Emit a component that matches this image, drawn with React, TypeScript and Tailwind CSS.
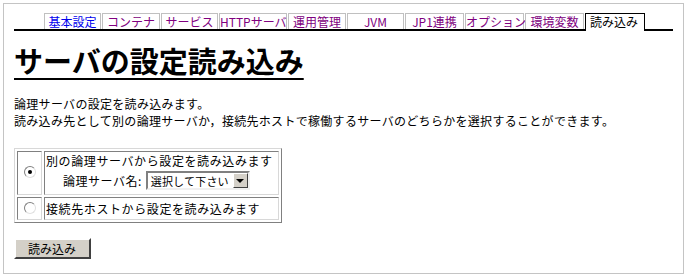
import React from "react";

const tabs = [
  { label: "基本設定", w: "w-[57px]", color: "text-[#0000ee]" },
  { label: "コンテナ", w: "w-[58px]", color: "text-[#800080]" },
  { label: "サービス", w: "w-[57px]", color: "text-[#800080]" },
  { label: "HTTPサーバ", w: "w-[68px]", color: "text-[#800080]" },
  { label: "運用管理", w: "w-[58px]", color: "text-[#800080]" },
  { label: "JVM", w: "w-[57px]", color: "text-[#800080]" },
  { label: "JP1連携", w: "w-[59px]", color: "text-[#800080]" },
  { label: "オプション", w: "w-[59px]", color: "text-[#800080]" },
  { label: "環境変数", w: "w-[59px]", color: "text-[#800080]" },
];

function Radio({ checked }: { checked?: boolean }) {
  return (
    <span className="relative inline-block w-[12px] h-[12px] rounded-full border border-t-[#808080] border-l-[#808080] border-b-[#e0e0e0] border-r-[#e0e0e0] bg-white">
      {checked && (
        <span className="absolute left-[3px] top-[3px] w-[4px] h-[4px] rounded-full bg-black" />
      )}
    </span>
  );
}

export default function App() {
  return (
    <div
      className="w-[687px] h-[277px] bg-white p-[3px] text-black"
      style={{ fontFamily: '"Noto Sans CJK JP", "Liberation Sans", sans-serif' }}
    >
      <div className="w-[681px] h-[271px] border border-[#c4c4c4] px-[10px]">
        {/* tab bar */}
        <div className="mt-[9px] flex items-end pl-[30px] border-b-2 border-black">
          {tabs.map((t) => (
            <div
              key={t.label}
              className={`${t.w} h-[16px] mr-px border border-b-0 border-[#c0c0c0] text-[12px] leading-[15px] text-center whitespace-nowrap ${t.color}`}
            >
              {t.label}
            </div>
          ))}
          <div className="w-[60px] h-[18px] -mb-[2px] border border-b-0 border-black bg-white text-[12px] leading-[16px] pl-[4px] whitespace-nowrap">
            読み込み
          </div>
        </div>

        <h1 className="mt-[12px] text-[29px] leading-[34px] font-bold underline decoration-2 underline-offset-[5px] w-fit">
          サーバの設定読み込み
        </h1>

        <div className="mt-[18px] text-[12px] leading-[17px] tracking-[0.3px]">
          <p>論理サーバの設定を読み込みます。</p>
          <p>
            読み込み先として別の論理サーバか，接続先ホストで稼働するサーバのどちらかを選択することができます。
          </p>
        </div>

        <table className="mt-[19px] w-[268px] border-separate border-spacing-[2px] border border-t-[#d8d8d8] border-l-[#d8d8d8] border-b-[#808080] border-r-[#808080] text-[12px]">
          <tbody>
            <tr>
              <td className="w-[25px] h-[44px] border border-t-[#808080] border-l-[#808080] border-b-[#d8d8d8] border-r-[#d8d8d8] text-center align-middle">
                <Radio checked />
              </td>
              <td className="border border-t-[#808080] border-l-[#808080] border-b-[#d8d8d8] border-r-[#d8d8d8] pl-[1px] align-top leading-[17px] tracking-[0.6px]">
                <div className="whitespace-nowrap">別の論理サーバから設定を読み込みます</div>
                <div className="flex items-center pl-[17px] mt-[2px] tracking-normal">
                  <span className="whitespace-nowrap tracking-[0.5px]">論理サーバ名:</span>
                  <div className="ml-[4px] w-[104px] h-[19px] flex items-center border-2 border-t-[#808080] border-l-[#808080] border-b-[#f0f0f0] border-r-[#f0f0f0] bg-white">
                    <span className="flex-1 pl-[3px] leading-[14px] whitespace-nowrap text-[11px] tracking-[0.2px]">
                      選択して下さい
                    </span>
                    <span className="w-[15px] h-[15px] flex items-center justify-center bg-[#d4d0c8] border border-t-white border-l-white border-b-[#404040] border-r-[#404040]">
                      <span className="w-0 h-0 border-l-[4px] border-r-[4px] border-t-[4px] border-l-transparent border-r-transparent border-t-black" />
                    </span>
                  </div>
                </div>
              </td>
            </tr>
            <tr>
              <td className="h-[23px] border border-t-[#808080] border-l-[#808080] border-b-[#d8d8d8] border-r-[#d8d8d8] text-center align-middle">
                <Radio />
              </td>
              <td className="border border-t-[#808080] border-l-[#808080] border-b-[#d8d8d8] border-r-[#d8d8d8] pl-[1px] align-middle leading-[17px] tracking-[0.6px] whitespace-nowrap">
                接続先ホストから設定を読み込みます
              </td>
            </tr>
          </tbody>
        </table>

        <button className="mt-[15px] w-[77px] h-[21px] bg-[#d4d0c8] border-2 border-t-white border-l-white border-b-[#404040] border-r-[#404040] text-[12px] leading-[15px] text-left pl-[12px]">
          読み込み
        </button>
      </div>
    </div>
  );
}
